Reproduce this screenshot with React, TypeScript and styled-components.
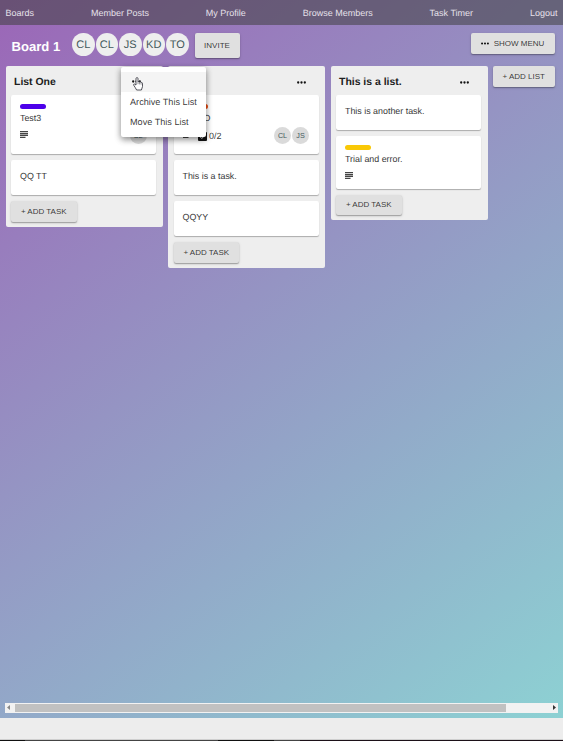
import React from "react";
import styled, { createGlobalStyle } from "styled-components";

const GlobalStyle = createGlobalStyle`
  * { box-sizing: border-box; }
  html, body { margin: 0; padding: 0; overflow: hidden; }
  body { font-family: "Liberation Sans", Arial, sans-serif; color: rgba(0, 0, 0, 0.8); }
`;

const Page = styled.div`
  width: 563px;
  height: 741px;
  display: flex;
  flex-direction: column;
  background: #ededed;
  text-rendering: geometricPrecision;
`;

const BoardArea = styled.div`
  height: 718px;
  display: flex;
  flex-direction: column;
  background: linear-gradient(142deg, #9b66b7, #8dd1d3);
`;

const Nav = styled.nav`
  height: 25px;
  padding: 0 5.5px;
  display: flex;
  justify-content: space-between;
  align-items: center;
  background: rgba(64, 64, 64, 0.55);
`;

const NavLink = styled.a`
  font-size: 9px;
  line-height: 12px;
  color: #e6e1ea;
  white-space: nowrap;
`;

const Header = styled.header`
  height: 41px;
  padding: 8px 8.5px 0 11.5px;
  display: flex;
  align-items: flex-start;
`;

const BoardTitle = styled.h1`
  width: 60.5px;
  margin: 6px 0 0;
  font-size: 13.1px;
  line-height: 16px;
  color: #fff;
  white-space: nowrap;
`;

const Members = styled.div`
  display: flex;
  gap: 1px;
  margin-right: 6px;
`;

const Member = styled.span`
  width: 22.5px;
  height: 23px;
  border-radius: 50%;
  background: #eee;
  color: #44595b;
  font-size: 11px;
  display: flex;
  align-items: center;
  justify-content: center;
`;

const Button = styled.button<{ $width: number; $height?: number }>`
  flex: none;
  width: ${(p) => p.$width}px;
  height: ${(p) => p.$height ?? 20.5}px;
  padding: 0;
  border: 0;
  border-radius: 2px;
  background: #e0e0e0;
  color: rgba(0, 0, 0, 0.78);
  box-shadow: 0 1px 1px rgba(0, 0, 0, 0.25), 0 1px 3px rgba(0, 0, 0, 0.15);
  font-family: inherit;
  font-size: 8px;
  white-space: nowrap;
  display: flex;
  align-items: center;
  justify-content: center;
  gap: 5px;
`;

const MenuSlot = styled.div`
  margin-left: auto;
`;

const Lists = styled.main`
  flex: 1;
  display: flex;
  align-items: flex-start;
  gap: 5.5px;
  padding-left: 5.5px;
`;

const ListPanel = styled.section`
  position: relative;
  flex: none;
  width: 157px;
  padding: 0 6.5px 5px 5.5px;
  border-radius: 2px;
  background: #eee;
`;

const ListHead = styled.div`
  height: 29px;
  padding: 4px 12.5px 0 3px;
  display: flex;
  align-items: center;
  justify-content: space-between;
`;

const ListTitle = styled.h2`
  margin: 0;
  font-size: 10.45px;
  line-height: 14px;
  color: #202020;
  white-space: nowrap;
`;

const Cards = styled.div`
  display: flex;
  flex-direction: column;
  gap: 6px;
`;

const Card = styled.article<{ $height: number }>`
  height: ${(p) => p.$height}px;
  padding: 9px 9.5px 0 9px;
  border-radius: 2px;
  background: #fff;
  box-shadow: 0 1px 1px rgba(0, 0, 0, 0.28);
`;

const Label = styled.div<{ $color: string }>`
  width: 25.5px;
  height: 5px;
  border-radius: 3px;
  margin-bottom: 3px;
  background: ${(p) => p.$color};
`;

const CardText = styled.p<{ $alone?: boolean }>`
  margin: ${(p) => (p.$alone ? "1px" : "0")} 0 0;
  font-size: 8.9px;
  line-height: 12px;
  color: #383838;
  white-space: nowrap;
`;

const Meta = styled.div`
  height: 18px;
  margin-top: 2px;
  display: flex;
  align-items: flex-start;
`;

const MetaIcon = styled.span`
  display: flex;
  margin-top: 5px;
  width: 15.5px;
`;

const Checks = styled.span`
  display: flex;
  align-items: center;
  gap: 2px;
  margin-top: 4px;
  font-size: 9px;
  line-height: 12px;
`;

const Assignees = styled.span`
  display: flex;
  gap: 1px;
  margin-left: auto;
`;

const Assignee = styled.span`
  width: 17px;
  height: 17px;
  margin-top: 1px;
  border-radius: 50%;
  background: #dadada;
  color: #44595b;
  font-size: 7.2px;
  display: flex;
  align-items: center;
  justify-content: center;
`;

const Menu = styled.div`
  position: absolute;
  z-index: 2;
  left: 115.5px;
  top: 0.5px;
  width: 85px;
  height: 70.5px;
  padding: 5px 0;
  border-radius: 2px;
  background: #fff;
  box-shadow: 0 2px 6px rgba(0, 0, 0, 0.35), 0 3px 7px rgba(0, 0, 0, 0.18);
`;

const MenuItem = styled.div<{ $active?: boolean }>`
  height: 20px;
  padding: 0 ${(p) => (p.$active ? 11 : 9)}px;
  display: flex;
  align-items: center;
  font-size: 9.13px;
  white-space: nowrap;
  background: ${(p) => (p.$active ? "#f4f4f4" : "transparent")};
`;

const Pointer = styled.svg`
  position: absolute;
  left: 12px;
  top: 10.5px;
`;

const Scrollbar = styled.div`
  height: 9.5px;
  margin: 0 5px 5.5px 5px;
  padding: 1px 2px;
  display: flex;
  align-items: center;
  background: #f2f2f2;
`;

const Thumb = styled.div`
  width: 490.5px;
  height: 7.5px;
  margin: 0 auto 0 4px;
  background: #c1c1c1;
`;

const Footer = styled.footer`
  flex: 1;
  display: flex;
  align-items: flex-end;
`;

const Edge = styled.div<{ $width: number; $color: string }>`
  width: ${(p) => p.$width}px;
  height: 1px;
  background: ${(p) => p.$color};
  box-shadow: 0 -1px 0 #cfcfcf;
`;

const Dots = ({ size = 9 }: { size?: number }) => (
  <svg width={size} height="3" viewBox="0 0 9 3" fill="#111">
    <circle cx="1.2" cy="1.5" r="1.15" />
    <circle cx="4.5" cy="1.5" r="1.15" />
    <circle cx="7.8" cy="1.5" r="1.15" />
  </svg>
);

const Description = () => (
  <MetaIcon>
    <svg width="8" height="7" viewBox="0 0 8 7" fill="#444">
      <path d="M0 0h8v1.3H0zM0 1.9h8v1.3H0zM0 3.8h8v1.3H0zM0 5.7h5.5v1.3H0z" />
    </svg>
  </MetaIcon>
);

const CheckBox = () => (
  <svg width="9" height="9" viewBox="0 0 9 9">
    <rect width="9" height="9" rx="1" fill="#151515" />
    <path d="M1.8 4.5 3.8 6.5 7.4 2.6" fill="none" stroke="#fff" strokeWidth="1" />
  </svg>
);

const Arrow = ({ right }: { right?: boolean }) => (
  <svg width="4" height="5" viewBox="0 0 4 5" fill={right ? "#333" : "#888"}>
    <path d={right ? "M1 0 4 2.5 1 5z" : "M3 0 0 2.5 3 5z"} />
  </svg>
);

const ListHeader = ({ title }: { title?: string }) => (
  <ListHead>
    <ListTitle>{title}</ListTitle>
    <Dots />
  </ListHead>
);

const links = ["Boards", "Member Posts", "My Profile", "Browse Members", "Task Timer", "Logout"];
const members = ["CL", "CL", "JS", "KD", "TO"];

export default function App() {
  return (
    <Page>
      <GlobalStyle />
      <BoardArea>
        <Nav>
          {links.map((l) => (
            <NavLink key={l}>{l}</NavLink>
          ))}
        </Nav>
        <Header>
          <BoardTitle>Board 1</BoardTitle>
          <Members>
            {members.map((m, i) => (
              <Member key={i}>{m}</Member>
            ))}
          </Members>
          <Button $width={45} $height={24.5}>INVITE</Button>
          <MenuSlot>
            <Button $width={84}>
              <Dots size={8} />
              SHOW MENU
            </Button>
          </MenuSlot>
        </Header>
        <Lists>
          <ListPanel>
            <ListHeader title="List One" />
            <Cards>
              <Card $height={59}>
                <Label $color="#4c00ea" />
                <CardText>Test3</CardText>
                <Meta>
                  <Description />
                  <Assignees>
                    <Assignee>CL</Assignee>
                  </Assignees>
                </Meta>
              </Card>
              <Card $height={35}>
                <CardText $alone>QQ TT</CardText>
              </Card>
              <Button $width={65.5}>+ ADD TASK</Button>
            </Cards>
            <Menu>
              <MenuItem $active>
                <Dots />
              </MenuItem>
              <MenuItem>Archive This List</MenuItem>
              <MenuItem>Move This List</MenuItem>
              <Pointer width="10" height="14" viewBox="0 0 10 14">
                <path
                  d="M3 8V1.6C3 .2 5 .2 5 1.6V5c.3-.8 1.5-.6 1.6.2.4-.6 1.5-.4 1.5.4.6-.4 1.4 0 1.4.8v3.2c0 1-.9 1.8-1.1 3.4H3.6C3.1 11.4 1.6 10 .7 8.2c-.5-1 .6-1.6 1.3-.8z"
                  fill="#fff"
                  stroke="#2b2b35"
                  strokeWidth=".8"
                  strokeLinejoin="round"
                />
                <path d="M5 5v2.2M6.6 5.4v2M8.1 5.8v1.8" stroke="#2b2b35" strokeWidth=".5" />
              </Pointer>
            </Menu>
          </ListPanel>
          <ListPanel>
            <ListHeader />
            <Cards>
              <Card $height={59}>
                <Label $color="#eb4d12" />
                <CardText>TO DO</CardText>
                <Meta>
                  <Description />
                  <Checks>
                    <CheckBox />
                    0/2
                  </Checks>
                  <Assignees>
                    <Assignee>CL</Assignee>
                    <Assignee>JS</Assignee>
                  </Assignees>
                </Meta>
              </Card>
              <Card $height={35}>
                <CardText $alone>This is a task.</CardText>
              </Card>
              <Card $height={35}>
                <CardText $alone>QQYY</CardText>
              </Card>
              <Button $width={65.5}>+ ADD TASK</Button>
            </Cards>
          </ListPanel>
          <ListPanel>
            <ListHeader title="This is a list." />
            <Cards>
              <Card $height={35}>
                <CardText $alone>This is another task.</CardText>
              </Card>
              <Card $height={52.5}>
                <Label $color="#f9c806" />
                <CardText>Trial and error.</CardText>
                <Meta>
                  <Description />
                </Meta>
              </Card>
              <Button $width={65.5}>+ ADD TASK</Button>
            </Cards>
          </ListPanel>
          <Button $width={61.5}>+ ADD LIST</Button>
        </Lists>
        <Scrollbar>
          <Arrow />
          <Thumb />
          <Arrow right />
        </Scrollbar>
      </BoardArea>
      <Footer>
        <Edge $width={25} $color="#111" />
        <Edge $width={193} $color="#444" />
        <Edge $width={56} $color="#111" />
        <Edge $width={26} $color="#444" />
        <Edge $width={263} $color="#1c1118" />
      </Footer>
    </Page>
  );
}
